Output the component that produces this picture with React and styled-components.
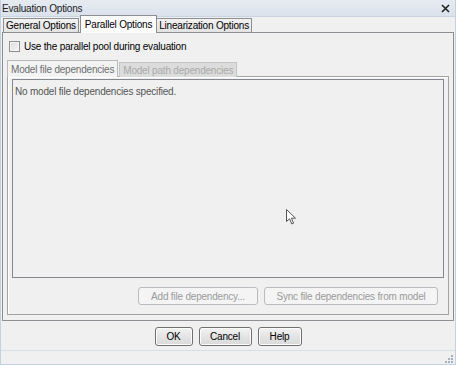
import styled, { createGlobalStyle } from 'styled-components';

const GlobalStyle = createGlobalStyle`
	body {
		margin: 0;
		background: #f0f0f0;
		font-family: 'Liberation Sans', Arial, sans-serif;
		font-size: 10px;
		letter-spacing: -0.2px;
		color: #000;
	}
`;

const Frame = styled.div`
	position: relative;
	width: 456px;
	height: 365px;
	box-sizing: border-box;
	border: 1px solid #c2d0e3;
	border-top: none;
	background: #f0f0f0;
	display: flex;
	flex-direction: column;
`;

const TitleBar = styled.div`
	height: 17px;
	box-sizing: border-box;
	display: flex;
	align-items: center;
	justify-content: space-between;
	padding: 0 3px 0 1px;
	background: linear-gradient(#e6ebf2, #dbe2ec);
	border-bottom: 1px solid #c9d4e2;
	font-size: 10px;
	color: #1a1a1a;
`;

const CloseIcon = styled.svg`
	width: 9px;
	height: 9px;
	margin-right: 2px;
`;

const TabStrip = styled.div`
	display: flex;
	align-items: flex-end;
	height: 16px;
	padding-left: 2px;
	margin-bottom: -1px;
	position: relative;
	z-index: 1;
`;

const Tab = styled.div`
	box-sizing: border-box;
	height: ${(p) => (p.$active ? '18px' : '15px')};
	padding: 0 ${(p) => (p.$active ? '4px' : '2px')};
	margin: ${(p) => (p.$active ? '0 -1px 0 1px' : '0')};
	display: flex;
	align-items: center;
	border: 1px solid #8c8e94;
	border-bottom: ${(p) => (p.$active ? 'none' : '1px solid #8c8e94')};
	background: ${(p) => (p.$active ? '#fcfcfc' : 'linear-gradient(#f2f2f2, #e3e3e3)')};
	position: relative;
	z-index: ${(p) => (p.$active ? 2 : 1)};
	white-space: nowrap;
`;

const OuterPanel = styled.div`
	height: 289px;
	box-sizing: border-box;
	margin: 0 1px;
	border: 1px solid #8c8e94;
	background: #f0f0f0;
	padding: 7px 4px 5px 4px;
	display: flex;
	flex-direction: column;
`;

const CheckRow = styled.label`
	display: flex;
	align-items: center;
	gap: 4px;
	height: 13px;
	padding-left: 2px;
`;

const CheckBox = styled.span`
	width: 11px;
	height: 11px;
	box-sizing: border-box;
	border: 1px solid #8f8f8f;
	background: linear-gradient(135deg, #dcdcdc, #f6f6f6);
	box-shadow: inset 0 0 0 1px #f4f4f4;
`;

const SubTabStrip = styled.div`
	display: flex;
	align-items: flex-end;
	height: 16px;
	margin-top: 8px;
	margin-bottom: -1px;
	position: relative;
	z-index: 1;
`;

const SubTab = styled.div`
	box-sizing: border-box;
	height: ${(p) => (p.$active ? '17px' : '15px')};
	padding: 0 3px;
	display: flex;
	align-items: center;
	border: 1px solid ${(p) => (p.$active ? '#b9b9b9' : '#c4c4c4')};
	border-bottom: none;
	background: ${(p) => (p.$active ? '#f3f3f3' : '#dcdcdc')};
	color: ${(p) => (p.$active ? '#6d6d6d' : '#a9a9a9')};
	margin-right: 1px;
	white-space: nowrap;
`;

const InnerPanel = styled.div`
	flex: 1;
	box-sizing: border-box;
	border: 1px solid #a3a3a3;
	box-shadow: inset 1px 1px 0 #fff;
	padding: 2px 4px 9px 4px;
	display: flex;
	flex-direction: column;
`;

const ListBox = styled.div`
	flex: 1;
	box-sizing: border-box;
	border: 1px solid #828790;
	background: #f0f0f0;
	padding: 6px 2px;
	color: #555;
`;

const ButtonRow = styled.div`
	display: flex;
	justify-content: ${(p) => p.$align || 'flex-end'};
	gap: 6px;
	margin-top: ${(p) => p.$top || '0'};
	padding-right: ${(p) => p.$right || '0'};
`;

const Button = styled.button`
	box-sizing: border-box;
	width: ${(p) => p.$w}px;
	height: ${(p) => (p.$disabled ? '18px' : '19px')};
	padding: 0;
	font-family: inherit;
	font-size: 10px;
	letter-spacing: -0.2px;
	white-space: nowrap;
	border-radius: 3px;
	border: 1px solid ${(p) => (p.$disabled ? '#b8bcc0' : '#707070')};
	background: ${(p) => (p.$disabled ? '#f4f4f4' : 'linear-gradient(#f3f3f3, #e4e4e4 50%, #d9d9d9)')};
	color: ${(p) => (p.$disabled ? '#9a9a9a' : '#000')};
	box-shadow: ${(p) => (p.$disabled ? 'none' : 'inset 0 0 0 1px #fcfcfc')};
`;

const Footer = styled.div`
	flex: 1;
	display: flex;
	align-items: flex-start;
	justify-content: center;
	padding-top: 6px;
	border-bottom: 1px solid #d7dee8;
`;

const StatusBar = styled.div`
	height: 12px;
	display: flex;
	justify-content: flex-end;
	align-items: flex-end;
	padding: 0 2px 1px 0;
`;

const Cursor = styled.svg`
	position: absolute;
	left: 285px;
	top: 209px;
	width: 11px;
	height: 16px;
`;

const Grip = () => (
	<svg width="9" height="9" viewBox="0 0 9 9">
		{[
			[7, 1],
			[4, 4],
			[7, 4],
			[1, 7],
			[4, 7],
			[7, 7],
		].map(([x, y]) => (
			<rect key={`${x}-${y}`} x={x} y={y} width="2" height="2" fill="#a8b0bb" />
		))}
	</svg>
);

export default function App() {
	return (
		<>
			<GlobalStyle />
			<Frame>
				<TitleBar>
					<span>Evaluation Options</span>
					<CloseIcon viewBox="0 0 9 9">
						<path d="M1 1 L8 8 M8 1 L1 8" stroke="#222" strokeWidth="1.6" />
					</CloseIcon>
				</TitleBar>
				<TabStrip>
					<Tab>General Options</Tab>
					<Tab $active>Parallel Options</Tab>
					<Tab>Linearization Options</Tab>
				</TabStrip>
				<OuterPanel>
					<CheckRow>
						<CheckBox />
						<span>Use the parallel pool during evaluation</span>
					</CheckRow>
					<SubTabStrip>
						<SubTab $active>Model file dependencies</SubTab>
						<SubTab>Model path dependencies</SubTab>
					</SubTabStrip>
					<InnerPanel>
						<ListBox>No model file dependencies specified.</ListBox>
						<ButtonRow $top="9px" $right="6px">
							<Button $disabled $w={120}>Add file dependency...</Button>
							<Button $disabled $w={174}>Sync file dependencies from model</Button>
						</ButtonRow>
					</InnerPanel>
				</OuterPanel>
				<Footer>
					<ButtonRow $align="center">
						<Button $w={38}>OK</Button>
						<Button $w={53}>Cancel</Button>
						<Button $w={44}>Help</Button>
					</ButtonRow>
				</Footer>
				<StatusBar>
					<Grip />
				</StatusBar>
				<Cursor viewBox="0 0 11 16">
					<path
						d="M0.5 0.5 L0.5 12.5 L3.5 9.8 L5.8 15 L7.6 14.2 L5.4 9.2 L9.5 9.2 Z"
						fill="#fff"
						stroke="#555"
						strokeWidth="1"
						strokeLinejoin="round"
					/>
				</Cursor>
			</Frame>
		</>
	);
}
